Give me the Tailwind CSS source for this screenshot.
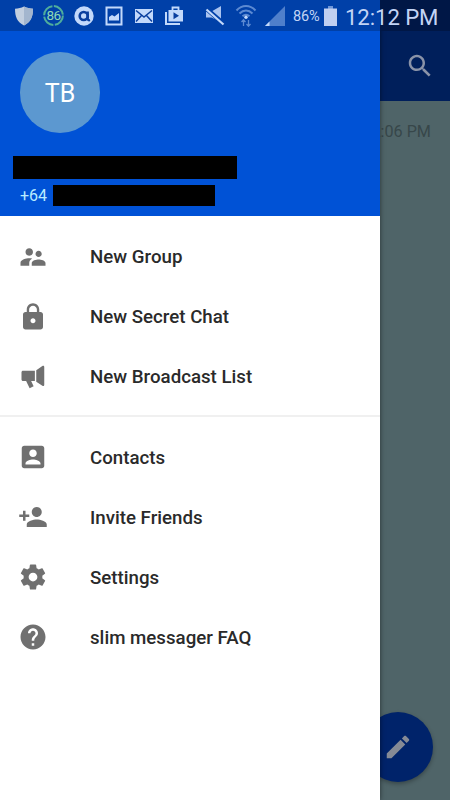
<!DOCTYPE html>
<html lang="en">
<head>
    <meta charset="UTF-8">
    <meta name="viewport" content="width=device-width, initial-scale=1.0">
    <title>slim messager</title>
    <script src="https://cdn.jsdelivr.net/npm/@tailwindcss/browser@4"></script>
</head>
<body class="bg-[#4f6468] font-['Roboto',sans-serif]">
<div class="relative w-[450px] h-[800px] overflow-hidden">

    <!-- Chat screen, dimmed behind the drawer -->
    <header class="h-[101px] pt-[31px] pr-[15px] bg-[#001f5b] flex items-center justify-end">
        <svg class="w-[30px] h-[30px]" viewBox="0 0 24 24" fill="#8a93a8"><path d="M15.5 14h-.79l-.28-.27C15.41 12.59 16 11.11 16 9.5 16 5.91 13.09 3 9.5 3S3 5.91 3 9.5 5.91 16 9.5 16c1.61 0 3.09-.59 4.23-1.57l.27.28v.79l5 4.99L20.49 19l-4.99-5zm-6 0C7.01 14 5 11.99 5 9.5S7.01 5 9.5 5 14 7.01 14 9.5 11.99 14 9.5 14z"/></svg>
    </header>
    <main class="pt-[19px] pr-[19px] text-right text-[16.2px] leading-[24px] text-[#37474a]">12:06 PM</main>
    <button class="absolute left-[363px] top-[712px] w-[70px] h-[70px] rounded-full bg-[#00236a] shadow-[0_2px_4px_rgba(0,0,0,0.3)] flex items-center justify-center">
        <svg class="w-[30px] h-[30px]" viewBox="0 0 24 24" fill="#858a95"><path d="M3 17.25V21h3.75L17.81 9.94l-3.75-3.75L3 17.25zM20.71 7.04c.39-.39.39-1.02 0-1.41l-2.34-2.34c-.39-.39-1.02-.39-1.41 0l-1.83 1.83 3.75 3.75 1.83-1.83z"/></svg>
    </button>

    <!-- Navigation drawer -->
    <aside class="absolute left-0 top-0 w-[380px] h-full bg-white shadow-[0_0_5px_rgba(0,0,0,0.5)]">
        <div class="h-[216px] pt-[52px] bg-[#0052d6]">
            <div class="ml-5 w-[80px] h-[81px] pt-[2px] rounded-full bg-[#5c98d0] text-white text-[25px] flex items-center justify-center">TB</div>
            <div class="mt-[23px] ml-[13px] w-[224px] h-[23px] bg-black"></div>
            <div class="mt-[6px] ml-5 flex items-center h-[21px] text-[16px] text-[#b9ecff]">
                <span class="w-[33px]">+64</span>
                <span class="w-[162px] h-[21px] bg-black"></span>
            </div>
        </div>
        <nav class="text-[18.7px] font-medium text-[#2a2a2a]">
            <ul class="pt-[11px] pb-[8px] border-b-2 border-[#f0f0f0]">
                <li class="h-[60px] pl-[17.5px] flex items-center gap-[42.5px]">
                    <svg class="w-[30px] h-[30px]" viewBox="0 0 24 24" fill="#707070"><path d="M16.5 12c1.38 0 2.49-1.12 2.49-2.5S17.88 7 16.5 7 14 8.12 14 9.5s1.12 2.5 2.5 2.5zM9 11c1.66 0 2.99-1.34 2.99-3S10.66 5 9 5 6 6.34 6 8s1.34 3 3 3zm7.5 3c-1.83 0-5.5.92-5.5 2.75V19h11v-2.25c0-1.83-3.67-2.75-5.5-2.75zM9 13c-2.33 0-7 1.17-7 3.5V19h7v-2.25c0-.85.33-2.34 2.37-3.47C10.5 13.1 9.66 13 9 13z"/></svg>
                    <span>New Group</span>
                </li>
                <li class="h-[60px] pl-[17.5px] flex items-center gap-[42.5px]">
                    <svg class="w-[30px] h-[30px]" viewBox="0 0 24 24" fill="#707070"><path d="M18 8h-1V6c0-2.76-2.24-5-5-5S7 3.24 7 6v2H6c-1.1 0-2 .9-2 2v10c0 1.1.9 2 2 2h12c1.1 0 2-.9 2-2V10c0-1.1-.9-2-2-2zm-6 9c-1.1 0-2-.9-2-2s.9-2 2-2 2 .9 2 2-.9 2-2 2zm3.1-9H8.9V6c0-1.71 1.39-3.1 3.1-3.1s3.1 1.39 3.1 3.1v2z"/></svg>
                    <span>New Secret Chat</span>
                </li>
                <li class="h-[60px] pl-[17.5px] flex items-center gap-[42.5px]">
                    <svg class="w-[30px] h-[30px]" viewBox="0 0 24 24" fill="#707070"><path d="M4 7h9.500v8.200h-3l2 4.200-3.200 1.500-2.800-5.700H4c-.7 0-1.200-.5-1.200-1.200V8.200C2.800 7.500 3.300 7 4 7zM14.600 6.500l4.900-3.300c.8-.5 1.500-.1 1.500.8v14.200c0 .9-.7 1.300-1.500.8l-4.900-3.300z"/></svg>
                    <span>New Broadcast List</span>
                </li>
            </ul>
            <ul class="pt-[10px]">
                <li class="h-[60px] pl-[17.5px] flex items-center gap-[42.5px]">
                    <svg class="w-[30px] h-[30px]" viewBox="0 0 24 24" fill="#707070"><path d="M3 5v14c0 1.1.89 2 2 2h14c1.1 0 2-.9 2-2V5c0-1.1-.9-2-2-2H5c-1.11 0-2 .9-2 2zm12 4c0 1.66-1.34 3-3 3s-3-1.34-3-3 1.34-3 3-3 3 1.34 3 3zm-9 8c0-2 4-3.1 6-3.1s6 1.1 6 3.1v1H6v-1z"/></svg>
                    <span class="pt-[2px]">Contacts</span>
                </li>
                <li class="h-[60px] pl-[17.5px] flex items-center gap-[42.5px]">
                    <svg class="w-[30px] h-[30px]" viewBox="0 0 24 24" fill="#707070"><path d="M15 12c2.21 0 4-1.79 4-4s-1.79-4-4-4-4 1.79-4 4 1.79 4 4 4zm-9-2V7H4v3H1v2h3v3h2v-3h3v-2H6zm9 4c-2.67 0-8 1.34-8 4v2h16v-2c0-2.66-5.33-4-8-4z"/></svg>
                    <span class="pt-[2px]">Invite Friends</span>
                </li>
                <li class="h-[60px] pl-[17.5px] flex items-center gap-[42.5px]">
                    <svg class="w-[30px] h-[30px]" viewBox="0 0 24 24" fill="#707070"><path d="M19.43 12.98c.04-.32.07-.64.07-.98s-.03-.66-.07-.98l2.11-1.65c.19-.15.24-.42.12-.64l-2-3.46c-.12-.22-.39-.3-.61-.22l-2.49 1c-.52-.4-1.08-.73-1.69-.98l-.38-2.65C14.46 2.18 14.25 2 14 2h-4c-.25 0-.46.18-.49.42l-.38 2.65c-.61.25-1.17.59-1.69.98l-2.49-1c-.23-.09-.49 0-.61.22l-2 3.46c-.13.22-.07.49.12.64l2.11 1.65c-.04.32-.07.65-.07.98s.03.66.07.98l-2.11 1.65c-.19.15-.24.42-.12.64l2 3.46c.12.22.39.3.61.22l2.49-1c.52.4 1.08.73 1.69.98l.38 2.65c.03.24.24.42.49.42h4c.25 0 .46-.18.49-.42l.38-2.65c.61-.25 1.17-.59 1.69-.98l2.49 1c.23.09.49 0 .61-.22l2-3.46c.12-.22.07-.49-.12-.64l-2.11-1.65zM12 15.5c-1.93 0-3.5-1.57-3.5-3.5s1.57-3.5 3.5-3.5 3.5 1.57 3.5 3.5-1.57 3.5-3.5 3.5z"/></svg>
                    <span class="pt-[2px]">Settings</span>
                </li>
                <li class="h-[60px] pl-[17.5px] flex items-center gap-[42.5px]">
                    <svg class="w-[30px] h-[30px]" viewBox="0 0 24 24" fill="#707070"><path d="M12 2C6.48 2 2 6.48 2 12s4.48 10 10 10 10-4.48 10-10S17.52 2 12 2zm1 17h-2v-2h2v2zm2.07-7.75l-.9.92C13.45 12.9 13 13.5 13 15h-2v-.5c0-1.1.45-2.1 1.17-2.83l1.24-1.26c.37-.36.59-.86.59-1.41 0-1.1-.9-2-2-2s-2 .9-2 2H8c0-2.21 1.79-4 4-4s4 1.79 4 4c0 .88-.36 1.68-.93 2.25z"/></svg>
                    <span class="pt-[2px]">slim messager FAQ</span>
                </li>
            </ul>
        </nav>
    </aside>

    <!-- System status bar, drawn over both layers -->
    <div class="absolute left-0 top-0 w-[450px] h-[31px] pl-[14px] flex items-center bg-linear-to-r from-[#0040a8] from-[380px] to-[#001746] to-[380px] text-[#c3d4f5]">
        <svg class="w-5 h-5" viewBox="0 0 20 20"><path d="M10 .5c3 1.5 5.5 2 9 2.3 0 8-2 13-9 16.7C3 15.8 1 10.8 1 2.8 4.5 2.5 7 2 10 .5z" fill="#c2cfdf"/><path d="M10 .5c3 1.5 5.5 2 9 2.3 0 8-2 13-9 16.7z" fill="#a3b6ce"/></svg>
        <div class="relative ml-[9px] w-[21px] h-[21px] flex items-center justify-center text-[13.5px] tracking-[-0.5px] text-[#8fd9b4]">
            <svg class="absolute inset-0 w-[21px] h-[21px]" viewBox="0 0 21 21"><circle cx="10.5" cy="10.5" r="9.4" fill="none" stroke="#4fae9c" stroke-width="2" stroke-dasharray="13.3 1.5"/></svg>
            <span>86</span>
        </div>
        <svg class="ml-[10px] w-5 h-5" viewBox="0 0 20 20"><circle cx="10" cy="10" r="9.7" fill="#c3d9fb"/><circle cx="9.7" cy="10" r="4" fill="none" stroke="#0a3f9f" stroke-width="2.6"/><path d="M13.7 5.5v7c0 1.5 1 2 2.3 1.5" fill="none" stroke="#0a3f9f" stroke-width="2.4"/></svg>
        <svg class="ml-[11px] w-[18px] h-5" viewBox="0 0 18 20"><path d="M1.5 1.5h15v17h-15z" fill="none" stroke="#c3d9fb" stroke-width="2"/><path d="M4 14.5V11l3-2 2.5 1.5L14 7v7.5z" fill="#c3d9fb"/></svg>
        <svg class="ml-[12px] w-[18px] h-[14px]" viewBox="0 0 18 14"><path d="M0 0h18v14H0z" fill="#c3d9fb"/><path d="M1 1.5l8 6.5 8-6.5M1 12.5l5.5-6M17 12.5l-5.5-6" fill="none" stroke="#0a3f9f" stroke-width="1.5"/></svg>
        <svg class="ml-[12px] w-[19px] h-[19px]" viewBox="0 0 19 19"><path d="M1 6v12h14" fill="none" stroke="#c3d9fb" stroke-width="2"/><path d="M7.5 4V1.5h6V4" fill="none" stroke="#c3d9fb" stroke-width="1.8"/><path d="M3.5 4H18v11.5H3.5z" fill="#c3d9fb"/><path d="M8.5 6.2l5.5 3.5-5.5 3.5z" fill="#0a3f9f"/></svg>
        <svg class="ml-[21px] w-5 h-5" viewBox="0 0 20 20"><path d="M1 5.5h5.5L16 0v16l-9.5-4.5H1z" fill="#a9c3ef"/><path d="M0 1.5l19 16.5" stroke="#0040a8" stroke-width="4.5"/><path d="M1.5 3.5l17 15" stroke="#c3d9fb" stroke-width="2.2"/></svg>
        <svg class="ml-[10px] w-[22px] h-[23px]" viewBox="0 0 22 23" fill="none"><path d="M1.5 6.5c5.5-6 13.5-6 19 0M4.5 9.5c4-4 9-4 13 0M7.5 12.3c2.2-2 4.8-2 7 0" stroke="#5c8ad2" stroke-width="2"/><circle cx="11" cy="13.2" r="1.7" fill="#c3d9fb"/><path d="M8.5 22v-6M6.5 18l2-2.2 2 2.2M13.5 16v6M11.5 20l2 2.2 2-2.2" stroke="#5c8ad2" stroke-width="1.3"/></svg>
        <svg class="ml-[8px] w-[20px] h-5" viewBox="0 0 20 20"><path d="M20 0v20H0z" fill="#4f7fcb"/><path d="M4.5 15.5V20H0z" fill="#c3d9fb"/></svg>
        <span class="ml-[8px] w-[31px] pt-[3px] text-[14.5px] tracking-[-0.2px]">86%</span>
        <svg class="w-[13px] h-5" viewBox="0 0 13 20"><path d="M4 0h5v3H4z" fill="#6f96d8"/><path d="M0 2.5h13V20H0z" fill="#c0cff1"/></svg>
        <span class="ml-[8px] pt-[3px] whitespace-nowrap text-[22.2px] leading-[28px] tracking-[-0.1px]">12:12 PM</span>
    </div>
</div>
</body>
</html>
